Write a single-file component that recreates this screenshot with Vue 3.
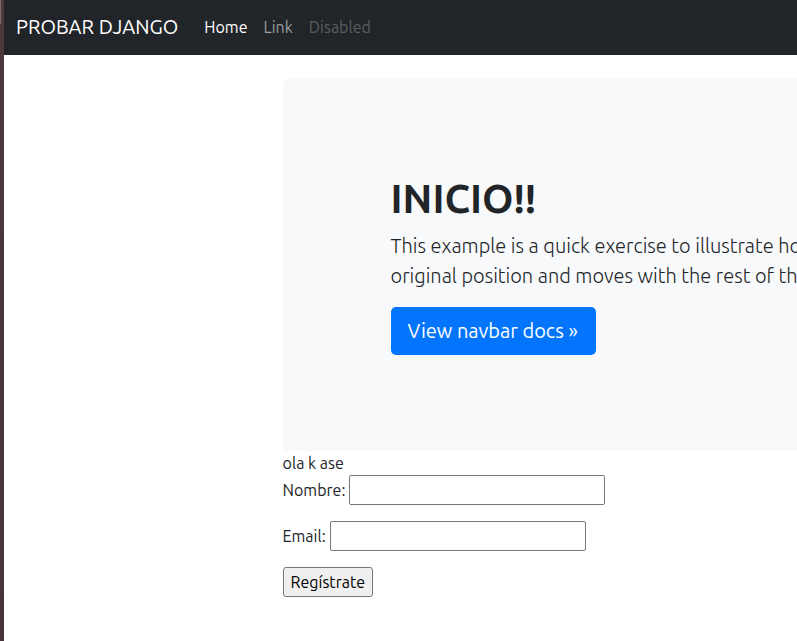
<script setup>
import { ref } from 'vue'

const nombre = ref('')
const email = ref('')
</script>

<template>
  <div class="window">
    <div class="edge"></div>
    <div class="page">
      <nav class="navbar">
        <a class="brand" href="#">PROBAR DJANGO</a>
        <a class="link active" href="#" aria-current="page">Home</a>
        <a class="link" href="#">Link</a>
        <a class="link disabled" href="#" aria-disabled="true">Disabled</a>
      </nav>
      <main class="container">
        <section class="hero">
          <h1>INICIO!!</h1>
          <p class="lead">
            This example is a quick exercise to illustrate ho<br />
            original position and moves with the rest of th
          </p>
          <a class="docs" href="#" role="button">View navbar docs »</a>
        </section>
        <div class="greeting">ola k ase</div>
        <form @submit.prevent>
          <div class="field">
            <label for="nombre">Nombre:</label>
            <input id="nombre" v-model="nombre" type="text" />
          </div>
          <div class="field">
            <label for="email">Email:</label>
            <input id="email" v-model="email" type="email" />
          </div>
          <button type="submit">Regístrate</button>
        </form>
      </main>
    </div>
  </div>
</template>

<style>
body {
  margin: 0;
  background: #fff;
}
</style>

<style scoped>
.window {
  display: flex;
  min-height: 100vh;
  overflow: hidden;
  color: #212529;
  font-family: Ubuntu, "Noto Sans", "Open Sans", sans-serif;
  font-size: 16px;
  font-weight: 400;
  line-height: 24px;
}
.edge {
  flex: 0 0 4px;
  background:
    linear-gradient(#7d6c6e, #7d6c6e) 0 0 / 1px 24px no-repeat,
    linear-gradient(#4f383b, #47333a);
}
.page {
  flex: 1;
  min-width: 0;
}
.navbar {
  box-sizing: border-box;
  display: flex;
  align-items: center;
  gap: 16px;
  height: 55px;
  padding: 0 0 2px 12px;
  background: #212529;
  white-space: nowrap;
}
.brand {
  margin-right: 10px;
  color: #fff;
  font-size: 20px;
  text-decoration: none;
}
.link {
  color: #9b9d9e;
  text-decoration: none;
}
.active {
  color: #fff;
}
.disabled {
  color: #5a5d60;
}
.container {
  padding: 24px 0 0 calc(35% + 1px);
}
.hero {
  padding: 96px 0 96px 108px;
  overflow: hidden;
  border-radius: 5px 0 0 5px;
  background: #f8f9fa;
}
h1 {
  margin: 0 0 8px;
  font-size: 40px;
  font-weight: 600;
  line-height: 48px;
}
.lead {
  margin: 0 0 16px;
  font-size: 20px;
  font-weight: 300;
  line-height: 30px;
  white-space: nowrap;
}
.docs {
  display: inline-block;
  padding: 9px 18px 9px 17px;
  border-radius: 5px;
  background: #0275fc;
  color: #fff;
  font-size: 20px;
  line-height: 30px;
  text-decoration: none;
  vertical-align: top;
}
.field {
  display: flex;
  align-items: center;
  gap: 4px;
  margin-bottom: 16px;
}
input {
  box-sizing: border-box;
  width: 256px;
  height: 30px;
  padding: 1px 2px;
  border: 1px solid #767676;
  border-radius: 2px;
  background: #fff;
  font: inherit;
}
button {
  height: 30px;
  padding: 0 7px;
  border: 1px solid #767676;
  border-radius: 3px;
  background: #efefef;
  color: #000;
  font: inherit;
}
</style>
